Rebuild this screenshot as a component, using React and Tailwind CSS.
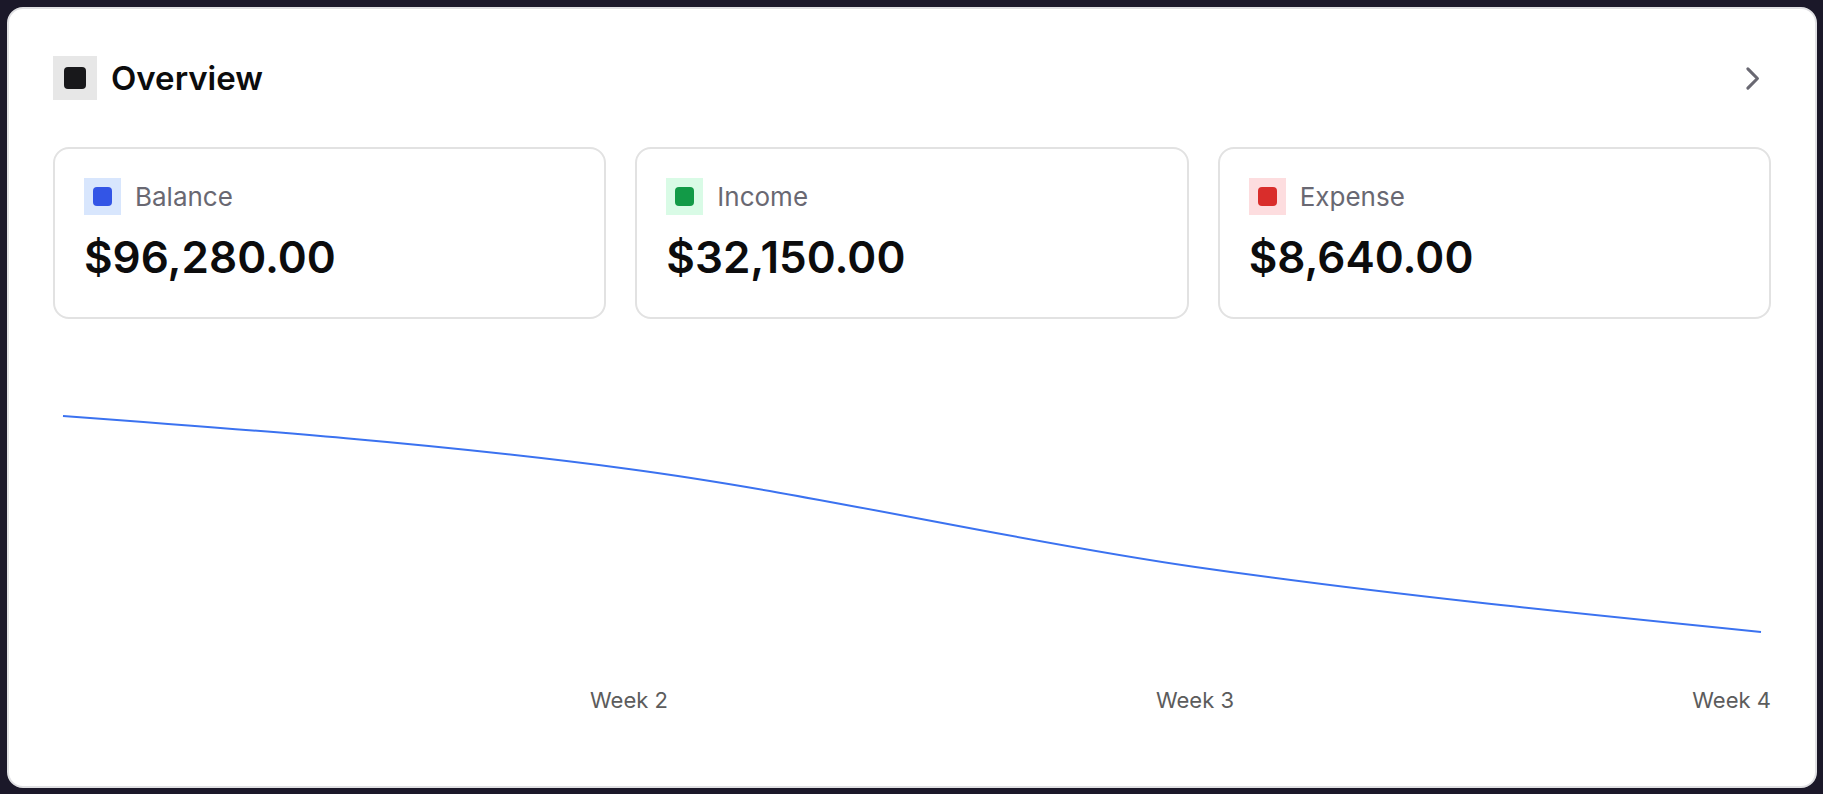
import React from "react";

const stats = [
  { label: "Balance", value: "$96,280.00", tint: "bg-[#d8e6fd]", dot: "bg-[#3355e6]" },
  { label: "Income", value: "$32,150.00", tint: "bg-[#d9fbe6]", dot: "bg-[#129a47]" },
  { label: "Expense", value: "$8,640.00", tint: "bg-[#fddddf]", dot: "bg-[#d92d2b]" },
];

const points = [
  [0, 0],
  [566, 53],
  [1133, 151],
  [1699, 216],
];

// Monotone cubic interpolation through the data points.
function monotonePath(pts) {
  const n = pts.length;
  const slopes = [];
  for (let i = 0; i < n - 1; i++) {
    slopes.push((pts[i + 1][1] - pts[i][1]) / (pts[i + 1][0] - pts[i][0]));
  }
  const tangents = new Array(n).fill(0);
  for (let i = 1; i < n - 1; i++) {
    const a = slopes[i - 1];
    const b = slopes[i];
    const avg = (a + b) / 2;
    tangents[i] =
      (Math.sign(a) + Math.sign(b)) * Math.min(Math.abs(a), Math.abs(b), Math.abs(avg) / 2);
  }
  tangents[0] = (3 * slopes[0] - tangents[1]) / 2;
  tangents[n - 1] = (3 * slopes[n - 2] - tangents[n - 2]) / 2;
  let d = `M${pts[0][0]},${pts[0][1]}`;
  for (let i = 0; i < n - 1; i++) {
    const dx = (pts[i + 1][0] - pts[i][0]) / 3;
    d += `C${pts[i][0] + dx},${pts[i][1] + dx * tangents[i]},${pts[i + 1][0] - dx},${
      pts[i + 1][1] - dx * tangents[i + 1]
    },${pts[i + 1][0]},${pts[i + 1][1]}`;
  }
  return d;
}

function StatCard({ label, value, tint, dot }) {
  return (
    <div className="rounded-2xl border-2 border-[#e2e2e2] px-[29px] pt-[29px] pb-[31px]">
      <div className="flex items-center gap-[14px]">
        <span className={`flex size-[37px] items-center justify-center ${tint}`}>
          <span className={`size-[19px] rounded ${dot}`} />
        </span>
        <span className="text-[26px] leading-[36px] text-[#696872]">{label}</span>
      </div>
      <p className="mt-[13px] text-[44px] leading-[58px] font-semibold text-[#0c0c0d]">{value}</p>
    </div>
  );
}

export default function App() {
  return (
    <div className="min-h-screen bg-[#1b1829] pt-[7px] pr-[6px] pb-[6px] pl-[7px] font-['Inter',sans-serif]">
      <main className="rounded-2xl border-2 border-[#e0e0e3] bg-white px-[44px] pt-[44px] pb-[72px]">
        <header className="flex items-center justify-between">
          <div className="flex items-center gap-[14px]">
            <span className="flex size-[44px] items-center justify-center bg-[#e7e7e7]">
              <span className="size-[22px] rounded bg-[#18181b]" />
            </span>
            <h1 className="text-[33px] leading-[50px] font-semibold text-[#0c0c0d]">Overview</h1>
          </div>
          <button type="button" aria-label="Open overview" className="flex size-[37px] items-center justify-center text-[#696872]">
            <svg viewBox="0 0 24 24" className="size-[37px]" fill="none" stroke="currentColor" strokeWidth="2" strokeLinecap="round" strokeLinejoin="round">
              <path d="m9 18.2 6.2-6.2L9 5.8" />
            </svg>
          </button>
        </header>

        <section className="mt-[44px] grid grid-cols-3 gap-[29px]">
          {stats.map((s) => (
            <StatCard key={s.label} {...s} />
          ))}
        </section>

        <section className="mt-[97px] px-[10px]">
          <svg viewBox="0 0 1699 216" preserveAspectRatio="none" className="block h-[216px] w-full overflow-visible" role="img" aria-label="Weekly balance">
            <path d={monotonePath(points)} fill="none" stroke="#3b72f0" strokeWidth="2" vectorEffect="non-scaling-stroke" />
          </svg>
          <div className="mt-[54px] grid grid-cols-[1fr_2fr_2fr_1fr] text-center text-[22px] leading-[28px] text-[#5c5c5c]">
            <span className="col-start-2">Week 2</span>
            <span>Week 3</span>
            <span className="-mr-[10px] text-right">Week 4</span>
          </div>
        </section>
      </main>
    </div>
  );
}
